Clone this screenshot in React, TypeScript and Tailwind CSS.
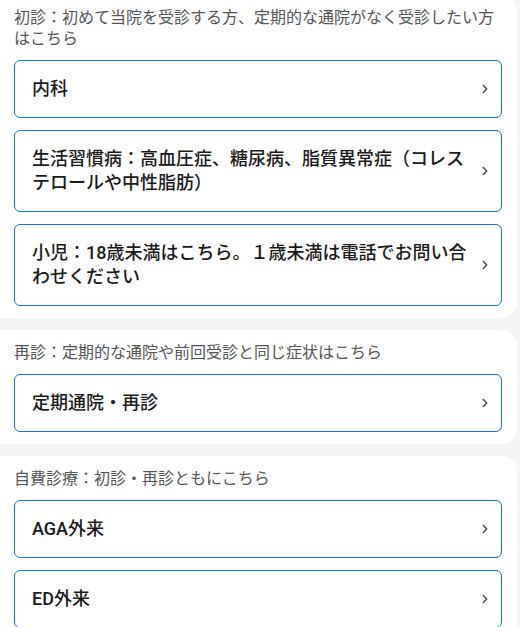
import React from 'react';
import { ChevronRight } from 'lucide-react';

type Section = {
  title: string;
  items: string[];
};

const sections: Section[] = [
  {
    title: '初診：初めて当院を受診する方、定期的な通院がなく受診したい方はこちら',
    items: [
      '内科',
      '生活習慣病：高血圧症、糖尿病、脂質異常症（コレステロールや中性脂肪）',
      '小児：18歳未満はこちら。１歳未満は電話でお問い合わせください',
    ],
  },
  {
    title: '再診：定期的な通院や前回受診と同じ症状はこちら',
    items: ['定期通院・再診'],
  },
  {
    title: '自費診療：初診・再診ともにこちら',
    items: ['AGA外来', 'ED外来'],
  },
];

const MenuButton: React.FC<{ label: string }> = ({ label }) => (
  <button className="flex w-full items-center gap-[9px] rounded-md border border-[#1a73c8] bg-white py-4 pl-[17px] pr-[9px] text-left">
    <span className="flex-1 text-[18px] font-medium leading-6 text-[#1a1a1a]">{label}</span>
    <ChevronRight size={14} strokeWidth={2.5} className="shrink-0 text-[#4a4a4a]" />
  </button>
);

export default function App() {
  return (
    <div
      className="min-h-screen overflow-hidden bg-[#f4f5f7] pr-[3px]"
      style={{ fontFamily: 'Roboto, "Noto Sans CJK JP", sans-serif' }}
    >
      <div className="-mt-[5px] flex flex-col gap-3">
        {sections.map((s) => (
          <div key={s.title} className="rounded-r-2xl bg-white pb-3 pl-[14px] pr-[15px] pt-3">
            <p className="text-[16px] leading-[21px] text-[#555]">{s.title}</p>
            <div className="mt-[11px] flex flex-col gap-3">
              {s.items.map((it) => (
                <MenuButton key={it} label={it} />
              ))}
            </div>
          </div>
        ))}
      </div>
    </div>
  );
}
